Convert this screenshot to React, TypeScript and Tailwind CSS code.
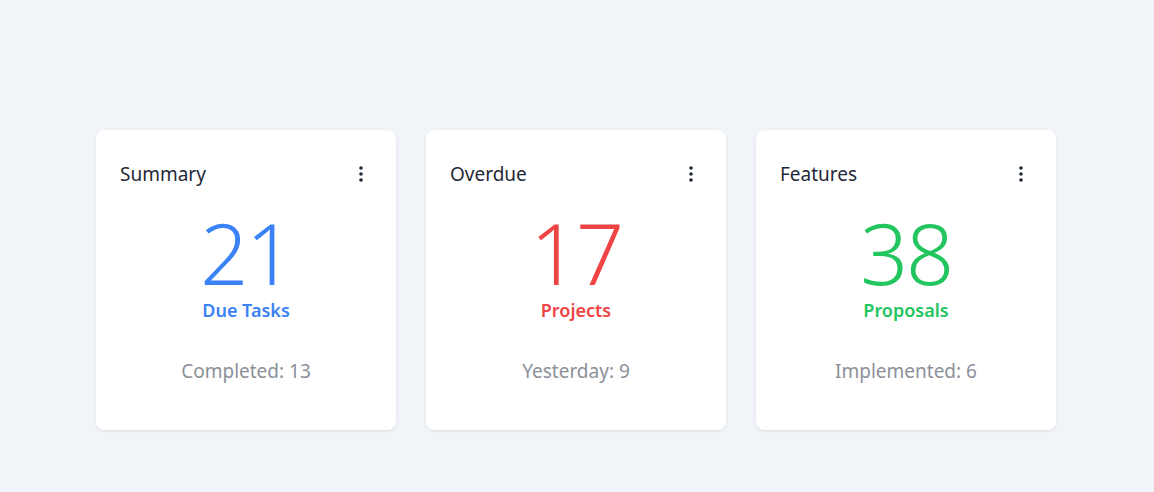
const cards = [
  { title: "Summary", value: "21", label: "Due Tasks", foot: "Completed: 13", color: "text-[#3b82f6]" },
  { title: "Overdue", value: "17", label: "Projects", foot: "Yesterday: 9", color: "text-[#ef4444]" },
  { title: "Features", value: "38", label: "Proposals", foot: "Implemented: 6", color: "text-[#22c55e]" },
];

const Dots = () => (
  <svg width="4" height="16" viewBox="0 0 4 16" className="text-[#1f2937]">
    <circle cx="2" cy="2" r="1.8" fill="currentColor" />
    <circle cx="2" cy="8" r="1.8" fill="currentColor" />
    <circle cx="2" cy="14" r="1.8" fill="currentColor" />
  </svg>
);

export default function App() {
  return (
    <div className="w-[1154px] h-[492px] bg-[#f1f4f9] flex justify-center pt-[130px] pr-[2px] gap-[30px] font-['Poppins','Open_Sans',sans-serif]">
      {cards.map((c) => (
        <div key={c.title} className="w-[300px] h-[300px] bg-white rounded-lg shadow-[0_1px_3px_rgba(0,0,0,0.1)] pl-6 pr-[33px] pt-[30px] flex flex-col">
          <div className="flex items-center justify-between">
            <span className="text-[19px] font-normal text-[#1f2937]">{c.title}</span>
            <Dots />
          </div>
          <div className={`mt-[20px] pl-[9px] text-center text-[84px] font-light leading-[1.05] tracking-tight ${c.color}`}>{c.value}</div>
          <div className={`pl-[9px] text-center text-[18px] font-semibold ${c.color}`}>{c.label}</div>
          <div className="mt-[33px] pl-[9px] text-center text-[19px] text-[#8b9099]">{c.foot}</div>
        </div>
      ))}
    </div>
  );
}
